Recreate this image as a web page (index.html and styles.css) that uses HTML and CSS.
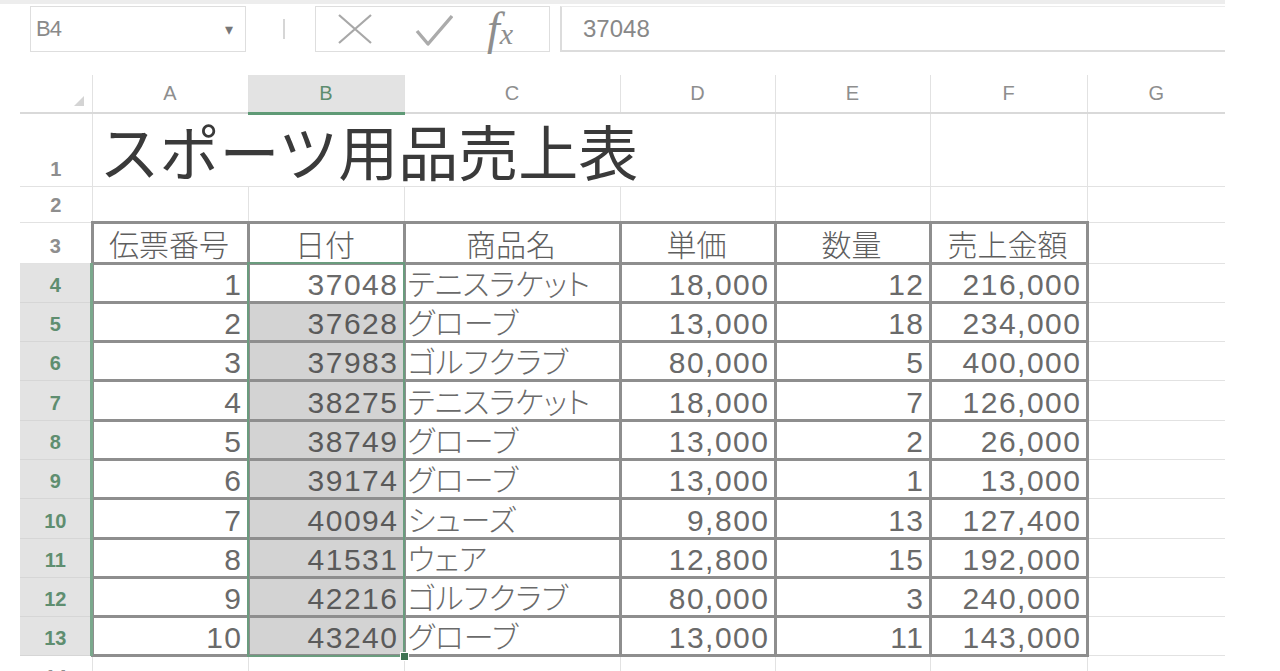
FILE: index.html
```html
<!DOCTYPE html>
<html lang="ja">
<head>
<meta charset="utf-8">
<title>スポーツ用品売上表</title>
<link rel="stylesheet" href="styles.css">
</head>
<body>
<div class="app">
  <div class="topstrip"></div>
  <div class="fbar">
    <div class="namebox"><span class="nb-text">B4</span><span class="nb-arrow">▾</span></div>
    <div class="fsep"><span class="sepline"></span></div>
    <div class="fbtns">
      <svg class="ic-x" width="36" height="30" viewBox="0 0 36 30"><path d="M2 1 L34 29 M34 1 L2 29" stroke="#a8a8a8" stroke-width="2.2" fill="none"/></svg>
      <svg class="ic-check" width="38" height="32" viewBox="0 0 38 32"><path d="M2 17 L13 30 L37 2" stroke="#ababab" stroke-width="3.4" fill="none" stroke-linejoin="round"/></svg>
      <span class="fx">f<span class="fx-x">x</span></span>
    </div>
    <div class="finput">37048</div>
  </div>
  <div class="sheet">
    <table class="grid">
      <colgroup>
        <col class="c-rh"><col class="c-a"><col class="c-b"><col class="c-c"><col class="c-d"><col class="c-e"><col class="c-f"><col class="c-g">
      </colgroup>
      <tr class="hdr">
        <th class="corner"><svg class="tri" width="10" height="10" viewBox="0 0 10 10"><polygon points="10,0 10,10 0,10" fill="#d4d4d4"/></svg></th>
        <th class="ch">A</th><th class="ch csel">B</th><th class="ch">C</th><th class="ch">D</th><th class="ch">E</th><th class="ch">F</th><th class="ch g">G</th>
      </tr>
      <tr class="r1">
        <th class="rh">1</th><td colspan="4" class="title">スポーツ用品売上表</td><td></td><td></td><td class="g"></td>
      </tr>
      <tr class="r2">
        <th class="rh">2</th><td></td><td></td><td></td><td></td><td></td><td></td><td class="g"></td>
      </tr>
      <tr class="r3">
        <th class="rh">3</th><td class="t hd">伝票番号</td><td class="t hd">日付</td><td class="t hd">商品名</td><td class="t hd">単価</td><td class="t hd">数量</td><td class="t hd">売上金額</td><td class="g"></td>
      </tr>
      <tr class="r">
        <th class="rh sel">4</th><td class="t num">1</td><td class="t num">37048</td><td class="t txt">テニスラケット</td><td class="t num">18,000</td><td class="t num">12</td><td class="t num">216,000</td><td class="g"></td>
      </tr>
      <tr class="r">
        <th class="rh sel">5</th><td class="t num">2</td><td class="t num fill">37628</td><td class="t txt">グローブ</td><td class="t num">13,000</td><td class="t num">18</td><td class="t num">234,000</td><td class="g"></td>
      </tr>
      <tr class="r">
        <th class="rh sel">6</th><td class="t num">3</td><td class="t num fill">37983</td><td class="t txt">ゴルフクラブ</td><td class="t num">80,000</td><td class="t num">5</td><td class="t num">400,000</td><td class="g"></td>
      </tr>
      <tr class="r">
        <th class="rh sel">7</th><td class="t num">4</td><td class="t num fill">38275</td><td class="t txt">テニスラケット</td><td class="t num">18,000</td><td class="t num">7</td><td class="t num">126,000</td><td class="g"></td>
      </tr>
      <tr class="r">
        <th class="rh sel">8</th><td class="t num">5</td><td class="t num fill">38749</td><td class="t txt">グローブ</td><td class="t num">13,000</td><td class="t num">2</td><td class="t num">26,000</td><td class="g"></td>
      </tr>
      <tr class="r">
        <th class="rh sel">9</th><td class="t num">6</td><td class="t num fill">39174</td><td class="t txt">グローブ</td><td class="t num">13,000</td><td class="t num">1</td><td class="t num">13,000</td><td class="g"></td>
      </tr>
      <tr class="r">
        <th class="rh sel">10</th><td class="t num">7</td><td class="t num fill">40094</td><td class="t txt">シューズ</td><td class="t num">9,800</td><td class="t num">13</td><td class="t num">127,400</td><td class="g"></td>
      </tr>
      <tr class="r">
        <th class="rh sel">11</th><td class="t num">8</td><td class="t num fill">41531</td><td class="t txt">ウェア</td><td class="t num">12,800</td><td class="t num">15</td><td class="t num">192,000</td><td class="g"></td>
      </tr>
      <tr class="r">
        <th class="rh sel">12</th><td class="t num">9</td><td class="t num fill">42216</td><td class="t txt">ゴルフクラブ</td><td class="t num">80,000</td><td class="t num">3</td><td class="t num">240,000</td><td class="g"></td>
      </tr>
      <tr class="r">
        <th class="rh sel">13</th><td class="t num">10</td><td class="t num fill">43240</td><td class="t txt">グローブ</td><td class="t num">13,000</td><td class="t num">11</td><td class="t num">143,000</td><td class="g"></td>
      </tr>
      <tr class="r14">
        <th class="rh">14</th><td></td><td></td><td></td><td></td><td></td><td></td><td class="g"></td>
      </tr>
    </table>
    <div class="rowsel"></div>
    <div class="selbox"><span class="handle"></span></div>
  </div>
</div>
</body>
</html>
```
FILE: styles.css
```css
* { box-sizing: border-box; }
html, body { margin: 0; padding: 0; background: #fff; }
body {
  width: 1280px;
  height: 671px;
  overflow: hidden;
  font-family: "Liberation Sans", "Noto Sans CJK JP", sans-serif;
  color: #666;
}
.topstrip { height: 4px; width: 1225px; background: #ededed; }

/* formula bar */
.fbar {
  display: flex;
  align-items: flex-start;
  height: 71px;
  padding: 2px 0 0 30px;
}
.namebox {
  width: 216px;
  height: 46px;
  border: 1px solid #dedede;
  display: flex;
  align-items: center;
  justify-content: space-between;
  padding: 0 12px 0 5px;
}
.nb-text { font-size: 22px; color: #8a8a8a; letter-spacing: -1px; }
.nb-arrow { font-size: 16px; color: #777; }
.fsep {
  width: 69px;
  height: 46px;
  display: flex;
  align-items: center;
  justify-content: center;
  padding-left: 6px;
}
.sepline { width: 2px; height: 20px; background: #d6d6d6; }
.fbtns {
  width: 235px;
  height: 46px;
  border: 1px solid #dedede;
  display: flex;
  align-items: center;
  padding-left: 21px;
}
.ic-x { margin-right: 42px; }
.ic-check { margin-right: 34px; margin-top: 2px; }
.fx {
  font-family: "Liberation Serif", serif;
  font-style: italic;
  font-size: 46px;
  line-height: 40px;
  color: #8e8e8e;
  margin-top: 4px;
}
.fx-x { font-size: 30px; }
.finput {
  margin-left: 10px;
  width: 665px;
  height: 46px;
  border-top: 1px solid #ececec;
  border-left: 2px solid #dcdcdc;
  border-bottom: 2px solid #dcdcdc;
  padding-left: 21px;
  display: flex;
  align-items: center;
  font-size: 24px;
  color: #888;
}

/* sheet */
.sheet { position: relative; margin-left: 20px; width: 1205px; }
.grid { border-collapse: collapse; table-layout: fixed; width: 1205px; }
col.c-rh { width: 72px; }
col.c-a { width: 156px; }
col.c-b { width: 156px; }
col.c-c { width: 216px; }
col.c-d { width: 155px; }
col.c-e { width: 155px; }
col.c-f { width: 157px; }
col.c-g { width: 138px; }

.grid td, .grid th {
  border: 1px solid #e2e2e2;
  padding: 0;
  white-space: nowrap;
}
.grid .g { border-right: none; }

tr.hdr { height: 38px; }
tr.r1 { height: 73px; }
tr.r2 { height: 36px; }
tr.r3 { height: 41px; }
tr.r { height: 39.3px; }
tr.r14 { height: 39px; }

.hdr th {
  border-top: none;
  border-bottom: 2px solid #d9d9d9;
  font-weight: normal;
  font-size: 20px;
  color: #8e8e8e;
  text-align: center;
  vertical-align: middle;
}
.hdr th.corner { border-left: none; text-align: right; vertical-align: bottom; padding: 0 8px 6px 0; }
.tri { display: block; margin-left: auto; }
.hdr th.csel {
  background: #e3e3e3;
  color: #5d8d6f;
  border-bottom: 3px solid #5f9a76;
}

.rh {
  border-left: none !important;
  font-size: 20px;
  line-height: 20px;
  font-weight: bold;
  color: #8e8e8e;
  text-align: center;
  vertical-align: bottom;
  padding-bottom: 7px !important;
}
.rh.sel {
  background: #e3e3e3;
  color: #5f8e70;
  border-bottom-color: #d6d6d6;
}

.title {
  font-size: 60px;
  line-height: 60px;
  color: #3a3a3a;
  vertical-align: bottom;
  padding: 0 0 0 7px !important;
}

.t {
  border: 3px solid #8e8e8e !important;
  font-size: 30px;
  line-height: 30px;
  vertical-align: bottom;
  color: #6a6a6a;
  padding: 0 4px 1px 2px !important;
}
.hd {
  text-align: center;
  color: #5e5e5e;
  font-size: 30px;
  font-weight: 300;
}
.num { text-align: right; letter-spacing: 1.5px; }
.txt {
  font-feature-settings: "palt";
  font-weight: 300;
  text-align: left;
}
.fill { background: #d3d3d3; color: #5a5a5a; }

/* selection overlays */
.rowsel {
  position: absolute;
  left: 70px;
  top: 188px;
  width: 3px;
  height: 393px;
  background: #7aa88c;
}
.selbox {
  position: absolute;
  left: 227px;
  top: 187px;
  width: 158px;
  height: 395px;
  border: 2px solid #6a9c7e;
}
.handle {
  position: absolute;
  right: -6px;
  bottom: -6px;
  width: 9px;
  height: 9px;
  background: #3f7353;
  border: 1px solid #fff;
}
```
